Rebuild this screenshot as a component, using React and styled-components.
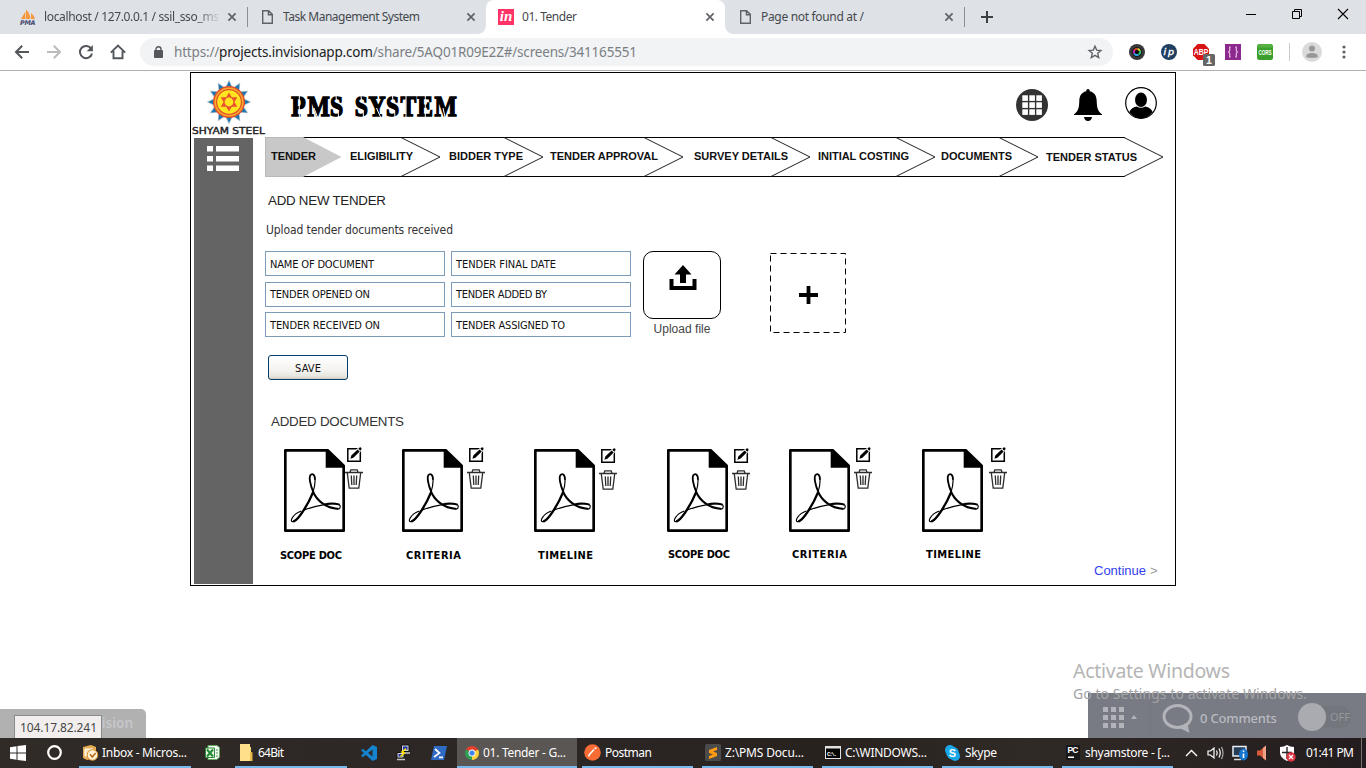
import React, { useLayoutEffect, useRef, useState } from "react";
import styled, { createGlobalStyle, css } from "styled-components";

const ui = `"Noto Sans", "Open Sans", sans-serif`;
const arial = `"Liberation Sans", Arial, sans-serif`;
const tahoma = `"DejaVu Sans Condensed", "DejaVu Sans", sans-serif`;

const Global = createGlobalStyle`
  * { box-sizing: border-box; }
  body { margin: 0; background: #fff; overflow: hidden; }
  svg { display: block; flex: none; overflow: visible; }
`;

/* ---------- text whose tracking is fitted to a given width ---------- */

const TextSpan = styled.span`
  display: inline-block;
  flex: none;
  white-space: pre;
  font-family: ${(p) => p.$font || ui};
  font-size: ${(p) => p.$size || 12}px;
  font-weight: ${(p) => p.$weight || 400};
  color: ${(p) => p.$color || "#000"};
  line-height: ${(p) => p.$lh || 16}px;
`;

function Text({ w, children, ...rest }) {
  const ref = useRef(null);
  const [spacing, setSpacing] = useState(0);
  useLayoutEffect(() => {
    if (!w) return;
    const natural = ref.current.getBoundingClientRect().width;
    setSpacing((w - natural) / (ref.current.textContent.length - 1));
  }, [w]);
  return (
    <TextSpan ref={ref} style={{ letterSpacing: spacing, marginRight: -spacing }} {...rest}>
      {children}
    </TextSpan>
  );
}

const Screen = styled.div`
  position: relative;
  width: 1366px;
  height: 768px;
  display: flex;
  flex-direction: column;
  overflow: hidden;
  background: #fff;
`;

/* ---------- browser tabs ---------- */

const TabStrip = styled.div`
  display: flex;
  height: 34px;
  padding-left: 8px;
  background: #dee1e6;
`;

const Tab = styled.div`
  position: relative;
  display: flex;
  align-items: center;
  width: 239px;
  height: 34px;
  padding: 0 11px 0 12px;
  ${(p) => p.$line && css`
    &::after { content: ""; position: absolute; right: -1px; top: 7px; width: 1px; height: 20px; background: #8b8e93; }
  `}
  ${(p) => p.$active && css`
    background: #fff;
    border-radius: 8px 8px 0 0;
    &::before, &::after {
      content: ""; position: absolute; bottom: 0; width: 8px; height: 8px;
    }
    &::before { left: -8px; background: radial-gradient(circle at 0 0, transparent 7.5px, #fff 8px); }
    &::after { right: -8px; background: radial-gradient(circle at 100% 0, transparent 7.5px, #fff 8px); }
  `}
`;

const TabIcon = styled.div`
  width: 24px;
  flex: none;
`;

const TabIconPad = styled.div`
  padding-left: 3px;
`;

const TabTitle = styled.div`
  flex: 1;
  overflow: hidden;
  height: 18px;
  display: flex;
  ${(p) => p.$fade && css`
    mask-image: linear-gradient(90deg, #000 152px, transparent 177px);
  `}
`;

const InvisionBadge = styled.div`
  width: 16px;
  height: 16px;
  background: #ff3366;
  color: #fff;
  font: italic 700 15px/14px "Liberation Serif", serif;
  text-align: center;
`;

const WindowButtons = styled.div`
  display: flex;
  margin-left: auto;
  height: 28px;
`;

const WindowButton = styled.div`
  width: 46px;
  display: flex;
  align-items: center;
  justify-content: center;
`;

const NewTab = styled.div`
  display: flex;
  align-items: center;
  padding-left: 17px;
`;

const CloseX = () => (
  <svg width="8" height="8" viewBox="0 0 8 8" stroke="#5f6368" strokeWidth="1.7">
    <path d="M.4 .4 7.6 7.6M7.6 .4 .4 7.6" />
  </svg>
);

const PageIcon = () => (
  <svg width="11" height="14" viewBox="0 0 11 14" fill="none" stroke="#5f6368" strokeWidth="1.4">
    <path d="M.7 .7H6.6L10.3 4.4V13.3H.7zM6.4 .9V4.7H10.1" />
  </svg>
);

const PmaIcon = () => (
  <svg width="16" height="16" viewBox="0 0 16 16">
    <path d="M1 10 5.4 2.5V10zM6 10V.5Q10.6 5 10.2 10zM11 10V4Q14.7 7 15 10z" fill="#f7983c" />
    <text x="0" y="15.6" fontSize="6.4" fontWeight="700" fontStyle="italic" fontFamily="DejaVu Sans" textLength="15.5" fill="#46496f">PMA</text>
  </svg>
);

/* ---------- address bar ---------- */

const Toolbar = styled.div`
  display: flex;
  align-items: center;
  height: 37px;
  padding: 0 14px 1px;
  background: #fff;
  border-bottom: 1px solid #b0b0b0;
`;

const NavIcons = styled.div`
  display: flex;
  width: 126px;
  gap: 16px;
`;

const Omnibox = styled.div`
  display: flex;
  align-items: center;
  width: 973px;
  height: 28px;
  padding: 0 11px 0 14px;
  border-radius: 14px;
  background: #f1f3f4;
`;

const Url = styled.div`
  flex: 1;
  padding-left: 11px;
  display: flex;
`;

const Muted = styled.span`
  color: #7b7f84;
`;

const Extensions = styled.div`
  display: flex;
  align-items: center;
  margin-left: 16px;
  gap: 16px;
`;

const ToolDivider = styled.div`
  width: 1px;
  height: 18px;
  margin: 0 12px 0 16px;
  background: #c9cbce;
`;

const MenuDots = styled.svg`
  margin-left: 20px;
  fill: #5f6368;
`;

function NavGlyphs() {
  return (
    <NavIcons>
      <svg width="16" height="16" viewBox="0 0 16 16" fill="none" stroke="#53575b" strokeWidth="2"><path d="M15 8H2.4M8.2 1.8 2 8l6.2 6.2" /></svg>
      <svg width="16" height="16" viewBox="0 0 16 16" fill="none" stroke="#b9bbbd" strokeWidth="2"><path d="M1 8H13.6M7.8 1.8 14 8l-6.2 6.2" /></svg>
      <svg width="16" height="16" viewBox="0 0 16 16"><path d="M13.3 4.9A6.1 6.1 0 1 0 14 9.4" fill="none" stroke="#53575b" strokeWidth="2" /><path d="M14.9 1V7.2H8.7z" fill="#53575b" /></svg>
      <svg width="16" height="16" viewBox="0 0 16 16" fill="none" stroke="#53575b" strokeWidth="1.9"><path d="M.8 8.6 8 1.6l7.2 7M3.5 7v7.3h9V7" /></svg>
    </NavIcons>
  );
}

function ExtensionIcons() {
  return (
    <Extensions>
      <svg width="16" height="16" viewBox="0 0 16 16">
        <circle cx="8" cy="8" r="8" fill="#39393b" />
        <circle cx="8" cy="8" r="4.8" fill="#0b0b0d" />
        <g fill="none" strokeWidth="1.9">
          <path d="M5.2 9.500A3.1 3.1 0 0 1 5.6 6" stroke="#d82ec0" />
          <path d="M5.6 6A3.1 3.1 0 0 1 8.6 5" stroke="#ed4a28" />
          <path d="M8.6 5A3.1 3.1 0 0 1 11 7" stroke="#cadb32" />
          <path d="M11 7A3.1 3.1 0 0 1 9.5 10.600" stroke="#28c36a" />
          <path d="M9.5 10.600A3.1 3.1 0 0 1 5.2 9.500" stroke="#2aa7e0" />
        </g>
      </svg>
      <svg width="16" height="16" viewBox="0 0 16 16">
        <circle cx="8" cy="8" r="8" fill="#213f61" />
        <text x="2.6" y="11" fontSize="9.5" fontStyle="italic" fontFamily="DejaVu Sans" stroke="#fff" strokeWidth=".4" textLength="10.5" fill="#fff">ip</text>
      </svg>
      <svg width="16" height="16" viewBox="0 0 16 16">
        <path d="M4.7 0h6.6L16 4.7v6.6L11.3 16H4.7L0 11.3V4.7z" fill="#d81313" />
        <text x="0.8" y="11" fontSize="8.5" fontWeight="700" fontFamily="Liberation Sans" textLength="14.6" lengthAdjust="spacingAndGlyphs" fill="#fff">ABP</text>
        <rect x="10" y="10" width="12" height="12" rx="1.5" fill="#666" />
        <text x="13" y="19.8" fontSize="10.5" fontWeight="700" fontFamily="Liberation Sans" fill="#fff">1</text>
      </svg>
      <svg width="16" height="16" viewBox="0 0 16 16">
        <rect width="16" height="16" fill="#8b2a8c" />
        <path d="M5.8 3H4.7V6.8L3.5 8l1.2 1.2V13h1.1M10.2 3h1.1V6.8L12.5 8l-1.2 1.2V13h-1.1" fill="none" stroke="#e9b8e6" strokeWidth="1.2" />
      </svg>
      <svg width="16" height="16" viewBox="0 0 16 16">
        <rect width="16" height="16" rx="2.5" fill="#3b9f2b" />
        <path d="M0 3.5Q0 0 3 0h10q3 0 3 3.500z" fill="#56b143" />
        <text x="1.4" y="10.8" fontSize="7.2" fontWeight="700" fontFamily="Liberation Sans" textLength="13.2" lengthAdjust="spacingAndGlyphs" fill="#fff">CORS</text>
      </svg>
    </Extensions>
  );
}

/* ---------- web page ---------- */

const Page = styled.main`
  flex: none;
  height: 638px;
  padding: 1px 0 0 190px;
`;

const Frame = styled.section`
  display: flex;
  flex-direction: column;
  width: 986px;
  height: 514px;
  border: 1px solid #000;
`;

const Header = styled.header`
  display: flex;
  height: 64px;
`;

const Brand = styled.div`
  display: flex;
  flex-direction: column;
  align-items: center;
  width: 75px;
  padding: 6px 0 0 1px;
`;

const Wordmark = styled.svg`
  margin: 1px 2px 0 0;
`;

const Title = styled.h1`
  margin: 15px 0 0 24px;
  width: 700px;
  height: 38px;
`;

const HeaderIcons = styled.div`
  display: flex;
  align-items: flex-start;
  margin-left: 26px;
  padding-top: 16px;
`;

const Body = styled.div`
  display: flex;
  flex: 1;
`;

const Sidebar = styled.aside`
  width: 59px;
  height: 446px;
  margin: 1px 0 0 3px;
  padding: 8px 0 0 13px;
  background: #646464;
`;

const Content = styled.div`
  width: 900px;
  margin-left: 12px;
`;

const Steps = styled.nav`
  display: flex;
  height: 40px;
`;

const Step = styled.div`
  position: relative;
  width: ${(p) => p.$width}px;
  padding: ${(p) => (p.$low ? 11 : 10)}px 0 0 ${(p) => p.$pad}px;
  border: solid #000;
  border-width: 1px 0;
  ${(p) => p.$current && css`
    background: #c8c8c8;
    border: solid #b9b9b9;
    border-width: 1px 0 1px 1px;
    z-index: 1;
  `}
`;

const StepTip = styled.svg`
  position: absolute;
  right: -39px;
  top: -1px;
`;

const StepLabel = styled.span`
  position: relative;
  display: flex;
  z-index: 2;
`;

const Heading = styled.div`
  display: flex;
  height: 16px;
  margin: ${(p) => p.$margin};
`;

const UploadArea = styled.div`
  display: flex;
  margin-top: 13px;
  height: 86px;
`;

const Fields = styled.div`
  display: grid;
  grid-template: 25px 25px 25px / 180px 180px;
  gap: 5.5px 6px;
  width: 366px;
`;

const Field = styled.div`
  display: flex;
  align-items: center;
  height: 25px;
  padding: 2px 0 0 4px;
  border: 1px solid #7c9bb8;
  background: #fff;
`;

const Upload = styled.div`
  display: flex;
  flex-direction: column;
  align-items: center;
  width: 78px;
  margin-left: 12px;
`;

const UploadBox = styled.div`
  display: flex;
  flex: none;
  justify-content: center;
  width: 78px;
  height: 68px;
  padding: 13px 0 0 1px;
  border: 1px solid #000;
  border-radius: 10px;
`;

const AddBox = styled.div`
  width: 76px;
  height: 80px;
  margin: 2px 0 0 49px;
`;

const SaveButton = styled.div`
  display: flex;
  align-items: center;
  justify-content: center;
  width: 80px;
  height: 25px;
  margin: 18px 0 0 3px;
  padding-top: 2px;
  border: 1px solid #003c6c;
  border-radius: 3px;
  background: linear-gradient(#fff, #f3f2ee 65%, #e8e6df 88%, #d2cdc2);
`;

const Documents = styled.div`
  display: flex;
  margin: 19px 0 0 19px;
  height: 116px;
`;

const DocCard = styled.div`
  width: ${(p) => p.$width}px;
`;

const DocTop = styled.div`
  display: flex;
  height: 83px;
`;

const DocActions = styled.div`
  display: flex;
  flex-direction: column;
  align-items: center;
  gap: 7px;
  width: 18px;
  margin: ${(p) => p.$drop - 2}px 0 0 ${(p) => p.$gap}px;
`;

const DocLabel = styled.div`
  display: flex;
  margin: ${(p) => p.$top}px 0 0 ${(p) => p.$shift}px;
`;

const Continue = styled.div`
  display: flex;
  gap: 4px;
  margin: -2px 0 0 829px;
`;

/* ---------- page drawings ---------- */

const ray = (n, r1, r2, half, offset = 0) =>
  Array.from({ length: n }, (_, i) => {
    const a = ((i + offset) * 2 * Math.PI) / n - Math.PI / 2;
    const p = (r, t) => `${(r * Math.cos(t)).toFixed(2)} ${(r * Math.sin(t)).toFixed(2)}`;
    return `M${p(r1, a - half)}L${p(r2, a)}L${p(r1, a + half)}z`;
  }).join("");

const SunLogo = () => (
  <svg width="46" height="46" viewBox="-23 -23 46 46">
    <path d={ray(12, 14.5, 22.4, 0.3)} fill="#b9c4ca" />
    <path d={ray(12, 14, 20.8, 0.24)} fill="#1878b5" />
    <circle r="16" fill="#e2512c" />
    <circle r="14.6" fill="#f9a92c" />
    <circle r="13" fill="#e2512c" />
    <circle r="11.800" fill="#ffe51f" />
    <path d="M0-9.500 8.200 4.750H-8.200zM0 9.500-8.200-4.750H8.200z" fill="#e9502c" />
    <circle r="4.400" fill="#ffe51f" />
  </svg>
);

const ListIcon = () => (
  <svg width="32" height="26" viewBox="0 0 32 26" fill="#fff">
    {[0, 10, 19.5].map((y) => (
      <g key={y}>
        <rect y={y} width="6" height="5.500" />
        <rect x="9" y={y} width="23" height="5.500" />
      </g>
    ))}
  </svg>
);

const StencilTitle = () => (
  <svg width="168" height="36" viewBox="0 0 168 36">
    <text
      transform="scale(.8 1)"
      x="1.500 22 50 66 81 98 120 138 159 180.500"
      y="28.300"
      fontFamily="Liberation Serif"
      fontWeight="700"
      fontSize="29.500"
      stroke="#000"
      strokeWidth="1.500"
    >PMS SYSTEM</text>
    <path d="M9.300 7v22M24 20l3.500 9M46 7l.5 7M48 22l.5 7M71 7l.5 7M73 22l.5 7M86.500 20l4 9M102.500 7l.5 7M104.500 22l.5 7M116 7v22M135.300 7v22M153 20l2 9" stroke="#fff" strokeWidth="1" fill="none" />
  </svg>
);

const GridBadge = () => (
  <svg width="32" height="32" viewBox="0 0 32 32">
    <circle cx="16" cy="16" r="16" fill="#333" />
    {[6.300, 13.300, 20.300].map((y) => [6.300, 13.300, 20.300].map((x) => <rect key={x + "-" + y} x={x} y={y} width="5.600" height="5.600" fill="#fff" />))}
  </svg>
);

const Bell = styled.svg`
  margin-left: 25px;
`;

const User = styled.svg`
  margin: -2px 0 0 22px;
`;

const HeaderGlyphs = () => (
  <HeaderIcons>
    <GridBadge />
    <Bell width="30" height="32" viewBox="0 0 30 32">
      <path d="M15 0q1.800 0 1.800 2.300C22 3.500 23.600 7.500 23.700 12c.2 7.500 1.300 10.300 5.300 13.300V26H1v-.7C5 22.300 6.100 19.500 6.300 12c.1-4.500 1.700-8.500 6.900-9.700Q13.200 0 15 0zM11 28h8q-.6 4-4 4t-4-4z" />
    </Bell>
    <User width="32" height="32" viewBox="0 0 32 32">
      <circle cx="16" cy="16" r="15.300" fill="#fff" stroke="#000" strokeWidth="1.200" />
      <ellipse cx="16" cy="12.800" rx="6" ry="7.200" />
      <path d="M4.400 25Q6 20.800 11.700 19.500q4.300 2.600 8.600 0 5.700 1.300 7.300 5.500-4.600 6.400-11.600 6.400T4.400 25z" />
    </User>
  </HeaderIcons>
);

const PdfIcon = () => (
  <svg width="61" height="83" viewBox="72 117 183 249" fill="none" stroke="#000">
    <path d="M76 121H203L251 167V362H76z" strokeWidth="8" strokeLinejoin="round" />
    <path d="M197 119H204L253 166V173H197z" fill="#000" stroke="none" />
    <path d="M160 246C150 224 147 202 151 196C156 189 165 192 165 209" strokeWidth="5.500" />
    <path d="M165 207C166 222 163 235 159 247C149 274 116 333 99 335C87 336 98 312 124 303" strokeWidth="3.500" />
    <path d="M159 247C147 277 118 328 100 335" strokeWidth="7" />
    <path d="M159 245C170 272 198 294 236 297" strokeWidth="6.500" />
    <path d="M236 297C242 296 241 286 239 285C225 275 166 287 135 299" strokeWidth="3.500" />
    <path d="M239 284C225 280 206 280 194 283" strokeWidth="5.500" />
  </svg>
);

const EditIcon = () => (
  <svg width="15" height="15" viewBox="0 0 15 15">
    <path d="M.8 1.700H13.300V14.200H.8z" fill="none" stroke="#000" strokeWidth="1.500" />
    <path d="M3.400 11.700 4.300 8.600 10.600 2.400 12.700 4.500 6.400 10.800zM11.300 1.700 12.600.5q.9-.4 1.600.3.700.8.100 1.700L13.300 3.700z" stroke="#fff" strokeWidth="1.500" />
    <path d="M3.400 11.700 4.300 8.600 10.600 2.400 12.700 4.500 6.400 10.800zM11.300 1.700 12.600.5q.9-.4 1.600.3.700.8.100 1.700L13.300 3.700z" />
  </svg>
);

const TrashIcon = () => (
  <svg width="18" height="20" viewBox="0 0 18 20" fill="none" stroke="#2d2d2d" strokeWidth="1.300">
    <path d="M0 3.500H18M5 3.300 5.800.8H12.200L13 3.300M2.300 3.800 4.200 19.200H13.800L15.700 3.800M6.300 6.500 6.800 16M9 6.500V16M11.700 6.500 11.200 16" />
  </svg>
);

const UploadIcon = () => (
  <svg width="28" height="25" viewBox="0 0 28 25">
    <path d="M14 0 22.500 9.500H17V18H11V9.500H5.500z" />
    <path d="M.5 14H4.500V21H23.500V14H27.500V25H.5z" />
  </svg>
);

/* ---------- page data ---------- */

const steps = [
  { label: "TENDER", width: 38, pad: 5, w: 45, current: true },
  { label: "ELIGIBILITY", width: 99, pad: 47, w: 63 },
  { label: "BIDDER TYPE", width: 103, pad: 47, w: 74 },
  { label: "TENDER APPROVAL", width: 140, pad: 45, w: 108 },
  { label: "SURVEY DETAILS", width: 127, pad: 49, w: 94 },
  { label: "INITIAL COSTING", width: 125, pad: 46, w: 91 },
  { label: "DOCUMENTS", width: 103, pad: 44, w: 71 },
  { label: "TENDER STATUS", width: 125, pad: 46, w: 91, low: true },
];

const fields = [
  ["NAME OF DOCUMENT", 104], ["TENDER FINAL DATE", 100],
  ["TENDER OPENED ON", 100], ["TENDER ADDED BY", 91],
  ["TENDER RECEIVED ON", 110], ["TENDER ASSIGNED TO", 109],
];

const docs = [
  { label: "SCOPE DOC", w: 62, width: 118, gap: 0, drop: 0, shift: -4, top: 16 },
  { label: "CRITERIA", w: 55, width: 132, gap: 4, drop: 0, shift: 4, top: 16 },
  { label: "TIMELINE", w: 55, width: 133, gap: 4, drop: 1, shift: 4, top: 16 },
  { label: "SCOPE DOC", w: 62, width: 122, gap: 4, drop: 1, shift: 1, top: 15 },
  { label: "CRITERIA", w: 55, width: 133, gap: 4, drop: 0, shift: 3, top: 15 },
  { label: "TIMELINE", w: 55, width: 90, gap: 6, drop: 0, shift: 4, top: 15 },
];

/* ---------- overlays above the taskbar ---------- */

const InvisionTab = styled.div`
  position: absolute;
  left: 0;
  top: 709px;
  width: 146px;
  height: 29px;
  padding: 5px 13px 0 0;
  text-align: right;
  border-radius: 0 5px 0 0;
  background: #b1b1b1;
`;

const AddressTip = styled.div`
  position: absolute;
  left: 14px;
  top: 715px;
  width: 88px;
  height: 23px;
  padding: 2px 0 0 5px;
  border: 1px solid #8a8a8a;
  border-bottom: 0;
  background: #f2eeee;
`;

const CommentBar = styled.div`
  position: absolute;
  left: 1088px;
  top: 693px;
  width: 278px;
  height: 45px;
  display: flex;
  align-items: center;
  padding: 3px 15px 0 15px;
  background: #787b83;
`;

const BarDivider = styled.div`
  width: 1px;
  height: 45px;
  margin: -3px 11px 0 13px;
  background: #74777e;
`;

const Caret = styled.svg`
  margin-left: 7px;
`;

const CommentCount = styled.div`
  display: flex;
  margin: 1px 0 0 7px;
`;

const Toggle = styled.div`
  display: flex;
  align-items: center;
  gap: 4px;
  width: 57px;
  height: 22px;
  margin-left: 21px;
  border-radius: 11px;
  background: #73767c;
`;

const Knob = styled.div`
  width: 28px;
  height: 28px;
  border-radius: 50%;
  background: #a9abb0;
`;

const Watermark = styled.div`
  position: absolute;
  left: 1073px;
  top: 657px;
  display: flex;
  flex-direction: column;
  align-items: flex-start;
`;

/* ---------- taskbar ---------- */

const Taskbar = styled.footer`
  position: absolute;
  left: 0;
  top: 738px;
  display: flex;
  align-items: center;
  width: 1366px;
  height: 30px;
  background: linear-gradient(90deg, #302b27, #2b2624 45%, #28221f 60%, #302a26 75%, #241d1f);
`;

const TaskItem = styled.div`
  display: flex;
  align-items: center;
  width: ${(p) => p.$width}px;
  height: 30px;
  margin-left: ${(p) => p.$ml || 0}px;
  padding: 1px 0 0 ${(p) => p.$pad || 0}px;
  background: ${(p) => (p.$active ? "#5a5653" : "transparent")};
  border-bottom: 2px solid ${(p) => (p.$open ? "#76b9ed" : "transparent")};
`;

const TaskIcon = styled.div`
  display: flex;
  align-items: center;
  width: ${(p) => p.$width}px;
  flex: none;
`;

const icons = {
  windows: <svg width="16" height="16" viewBox="0 0 16 16" fill="#fff"><path d="M0 2.300 6.500 1.300V7.500H0zM7.500 1.100 16 0V7.500H7.500zM0 8.500H6.500V14.700L0 13.700zM7.500 8.500H16V16L7.500 14.900z" /></svg>,
  cortana: <svg width="15" height="15" viewBox="0 0 15 15"><circle cx="7.500" cy="7.500" r="6.300" fill="none" stroke="#fff" strokeWidth="2.200" /></svg>,
  outlook: <svg width="16" height="16" viewBox="0 0 16 16"><path d="M1 2 9 0l5 2V13L5 15 1 13z" fill="#e8ad52" /><path d="M3 4H11V11H3z" fill="#f8e2b3" stroke="#fff" /><circle cx="10.500" cy="10" r="5.300" fill="#fff3d4" stroke="#d88a2b" /><path d="M8 9.200 10.300 12 13.600 8" fill="none" stroke="#b96c1d" strokeWidth="1.600" /></svg>,
  excel: <svg width="15" height="15" viewBox="0 0 15 15"><path d="M3 .5H12L14.500 2.500V12L12 14.500H3z" fill="#f3faf1" stroke="#64a761" /><path d="M.5 3H9.500V12.500H.5z" fill="#e9f5e6" stroke="#2f8a3a" /><path d="M2 4.500 8 11.500M8 4.500 2 11.500" stroke="#1f8a33" strokeWidth="2" /><path d="M11 5H13M11 8H13M11 11H13" stroke="#47934d" /></svg>,
  folder: <svg width="14" height="17" viewBox="0 0 14 17"><path d="M0 0H8V3H11V17H0z" fill="#f9d978" /><path d="M8 9 12.500 8V17H8z" fill="#e6b94d" /><path d="M0 0H10V17H0z" fill="#ffe08a" /></svg>,
  vscode: <svg width="16" height="16" viewBox="0 0 16 16"><path d="M11.500 0 16 2V14L11.500 16 0 5.200 1.800 3.800 11.500 11.500V4.500L1.800 12.200 0 10.800z" fill="#1584cf" /></svg>,
  putty: <svg width="15" height="17" viewBox="0 0 15 17"><path d="M5.500 1H13V7.500H5.500zM1 8.500H8V14H1z" fill="#d4d4d4" stroke="#111" /><path d="M7 2.500H11.500V5.800H7zM2.500 10H6.500V12.500H2.500z" fill="#1c31a8" /><path d="M10 4.500 6 8 8.500 9 4.500 12.500" fill="none" stroke="#ffe800" strokeWidth="1.600" /><path d="M1 15.500H9M9 9H14" stroke="#c4c4c4" strokeWidth="1.500" /></svg>,
  shell: <svg width="16" height="14" viewBox="0 0 16 14"><path d="M3 0H16L13 14H0z" fill="#2f6bc4" /><path d="M4 3 8.500 7 3 11M8 11.300H12" fill="none" stroke="#fff" strokeWidth="1.700" /></svg>,
  chrome: <svg width="14" height="14" viewBox="-7 -7 14 14"><path d="M0 0-6.060-3.500A7 7 0 0 1 6.060-3.500z" fill="#e3402f" /><path d="M0 0 6.060-3.500A7 7 0 0 1 0 7z" fill="#fdd23a" /><path d="M0 0 0 7A7 7 0 0 1-6.060-3.500z" fill="#2f9f50" /><circle r="3.500" fill="#fff" /><circle r="2.600" fill="#3f83ec" /></svg>,
  postman: <svg width="17" height="17" viewBox="0 0 17 17"><circle cx="8.500" cy="8.500" r="8.300" fill="#f76b35" /><path d="M4.500 12.500 5.500 10.500 10 5.500M10.500 4.500 12.500 4" stroke="#fff" strokeWidth="1.500" /></svg>,
  sublime: <svg width="16" height="17" viewBox="0 0 16 17"><rect width="16" height="17" rx="1.500" fill="#4b4b4b" /><path d="M12 3V6L8 7.500 12 9V12L4 15V12L8 10.500 4 9V6z" fill="#ff9c12" /></svg>,
  cmd: <svg width="16" height="13" viewBox="0 0 16 13"><rect width="16" height="13" fill="#e2e2e2" /><rect x="1" y="2.500" width="14" height="9.500" fill="#050505" /><text x="2" y="9.500" fontSize="6" fontWeight="700" fontFamily="Liberation Mono" textLength="10" fill="#fff">C:\.</text></svg>,
  skype: <svg width="15" height="16" viewBox="0 0 15 16"><circle cx="5" cy="5" r="5" fill="#19a7e8" /><circle cx="10" cy="11" r="5" fill="#19a7e8" /><circle cx="7.500" cy="8" r="6.300" fill="#19a7e8" /><text x="3.800" y="12" fontSize="11" fontWeight="700" fontFamily="Liberation Sans" fill="#fff">S</text></svg>,
  pycharm: <svg width="14" height="15" viewBox="0 0 14 15"><rect width="14" height="15" fill="#181818" /><text x="1.500" y="8" fontSize="8.500" fontWeight="700" fontFamily="Liberation Sans" textLength="11" fill="#fff">PC</text><rect x="2" y="11.500" width="6" height="1.500" fill="#fff" /></svg>,
};

const tasks = [
  { icon: "windows", ml: 10, width: 16 },
  { icon: "cortana", ml: 20.5, width: 15 },
  { icon: "outlook", ml: 17.5, width: 112, pad: 3, iw: 20, text: "Inbox - Micros...", w: 85, open: true },
  { icon: "excel", ml: 14, width: 15 },
  { icon: "folder", ml: 15, width: 112, pad: 5, iw: 18, text: "64Bit", w: 26, open: true },
  { icon: "vscode", ml: 14, width: 16 },
  { icon: "putty", ml: 19, width: 15 },
  { icon: "shell", ml: 20, width: 16 },
  { icon: "chrome", ml: 10, width: 120, pad: 8, iw: 18, text: "01. Tender - G...", w: 83, open: true, active: true },
  { icon: "postman", ml: 5, width: 111, pad: 2, iw: 21, text: "Postman", w: 47, open: true },
  { icon: "sublime", ml: 9, width: 111, pad: 3, iw: 20, text: "Z:\\PMS Docu...", w: 79, open: true },
  { icon: "cmd", ml: 9, width: 111, pad: 3, iw: 20, text: "C:\\WINDOWS...", w: 82, open: true },
  { icon: "skype", ml: 9, width: 111, pad: 3, iw: 20, text: "Skype", w: 32, open: true },
  { icon: "pycharm", ml: 9, width: 111, pad: 4, iw: 19, text: "shyamstore - [...", w: 85, open: true },
];

const Tray = styled.div`
  display: flex;
  align-items: center;
  margin-left: 12px;
`;

const ClockBox = styled.div`
  display: flex;
  align-items: center;
  height: 30px;
  margin-left: 11px;
  padding-right: 7px;
  border-right: 1px solid #77716e;
`;

const TrayGlyphs = () => (
  <svg width="110" height="18" viewBox="0 0 110 18">
    <path d="M1 12 6.500 6.500 12 12" fill="none" stroke="#fff" strokeWidth="1.400" />
    <g fill="none" stroke="#fff" strokeWidth="1.200">
      <path d="M23 7H25.500L29 4V14L25.500 11H23z" />
      <path d="M31.500 6.500Q33 9 31.500 11.500M34 4.500Q36.500 9 34 13.500" />
      <path d="M36.500 3Q39.500 9 36.500 15" stroke="#aaa" />
    </g>
    <path d="M48 2.500H61V12H48z" fill="#263b55" stroke="#e7eef7" strokeWidth="1.500" />
    <path d="M49 15.500H56" stroke="#ddd" strokeWidth="1.500" />
    <ellipse cx="58.500" cy="10.500" rx="4.500" ry="6" fill="#1475cf" />
    <path d="M58.500 6.500V8M58.500 9.500V14" stroke="#fff" strokeWidth="1.600" />
    <path d="M72 6.500H75L81 1.500V16.500L75 11.500H72z" fill="#d75b3b" />
    <path d="M78 4 81 1.500V16.500L78 14z" fill="#f0a287" />
    <path d="M95 3Q99 3 102 1 105 3 109 3V8.500Q109 14 102 17 95 14 95 8.500z" fill="#fff" />
    <path d="M102 3V15M97 8.500H107" stroke="#2a2624" strokeWidth="1.400" />
    <circle cx="106" cy="13" r="4.700" fill="#de3340" />
    <path d="M104 11 108 15M108 11 104 15" stroke="#fff" strokeWidth="1.300" />
  </svg>
);

/* ---------- app ---------- */

export default function App() {
  const tabText = { $size: 12, $lh: 18, $color: "#45494d" };
  return (
    <Screen>
      <Global />
      <TabStrip>
        <Tab $line>
          <TabIcon><PmaIcon /></TabIcon>
          <TabTitle $fade><Text {...tabText} w={175}>localhost / 127.0.0.1 / ssil_sso_ms</Text></TabTitle>
          <CloseX />
        </Tab>
        <Tab>
          <TabIcon><TabIconPad><PageIcon /></TabIconPad></TabIcon>
          <TabTitle><Text {...tabText} w={137}>Task Management System</Text></TabTitle>
          <CloseX />
        </Tab>
        <Tab $active>
          <TabIcon><InvisionBadge>in</InvisionBadge></TabIcon>
          <TabTitle><Text {...tabText} w={55}>01. Tender</Text></TabTitle>
          <CloseX />
        </Tab>
        <Tab $line>
          <TabIcon><TabIconPad><PageIcon /></TabIconPad></TabIcon>
          <TabTitle><Text {...tabText} w={103}>Page not found at /</Text></TabTitle>
          <CloseX />
        </Tab>
        <NewTab>
          <svg width="12" height="12" viewBox="0 0 12 12" stroke="#3c4043" strokeWidth="2"><path d="M6 0V12M0 6H12" /></svg>
        </NewTab>
        <WindowButtons>
          <WindowButton><svg width="10" height="10" viewBox="0 0 10 10"><rect y="5" width="10" height="1" /></svg></WindowButton>
          <WindowButton>
            <svg width="10" height="10" viewBox="0 0 10 10" fill="none" stroke="#000"><path d="M.5 2.500H7.500V9.500H.5zM2.500 2.500V.5H9.500V7.500H7.500" /></svg>
          </WindowButton>
          <WindowButton><svg width="10" height="10" viewBox="0 0 10 10" stroke="#000" strokeWidth="1.100"><path d="M0 0 10 10M10 0 0 10" /></svg></WindowButton>
        </WindowButtons>
      </TabStrip>

      <Toolbar>
        <NavGlyphs />
        <Omnibox>
          <svg width="9" height="12" viewBox="0 0 9 12"><rect y="4" width="9" height="8" rx="1" fill="#54585c" /><path d="M2 5V3.200Q2 .8 4.500.8T7 3.200V5" fill="none" stroke="#54585c" strokeWidth="1.400" /></svg>
          <Url>
            <Text $size={13.5} $lh={18} $color="#202124" w={463}>
              <Muted>https://</Muted>projects.invisionapp.com<Muted>/share/5AQ01R09E2Z#/screens/341165551</Muted>
            </Text>
          </Url>
          <svg width="14" height="14" viewBox="0 0 14 14" fill="none" stroke="#5f6368" strokeWidth="1.400"><path d="M7 1.200 8.700 5.100 12.900 5.500 9.700 8.300 10.700 12.500 7 10.300 3.300 12.500 4.300 8.300 1.100 5.500 5.300 5.100z" /></svg>
        </Omnibox>
        <ExtensionIcons />
        <ToolDivider />
        <svg width="20" height="20" viewBox="0 0 20 20"><circle cx="10" cy="10" r="10" fill="#dadada" /><circle cx="10" cy="6.500" r="3" fill="#989898" /><path d="M4 15Q4 11 10 11T16 15Q14 16 10 16T4 15z" fill="#989898" /></svg>
        <MenuDots width="4" height="14" viewBox="0 0 4 14"><circle cx="2" cy="2" r="1.600" /><circle cx="2" cy="7" r="1.600" /><circle cx="2" cy="12" r="1.600" /></MenuDots>
      </Toolbar>

      <Page>
        <Frame>
          <Header>
            <Brand>
              <SunLogo />
              <Wordmark width="73" height="8" viewBox="0 0 73 8">
                <text x="0" y="8" fontFamily="DejaVu Sans" fontSize="8" textLength="73" lengthAdjust="spacingAndGlyphs" fill="#222" stroke="#222" strokeWidth=".35">SHYAM STEEL</text>
              </Wordmark>
            </Brand>
            <Title><StencilTitle /></Title>
            <HeaderGlyphs />
          </Header>
          <Body>
            <Sidebar><ListIcon /></Sidebar>
            <Content>
              <Steps>
                {steps.map((s) => (
                  <Step key={s.label} $width={s.width} $pad={s.pad} $current={s.current} $low={s.low}>
                    <StepTip width="39" height="40" viewBox="0 0 39 40">
                      {s.current
                        ? <path d="M0 0 38.500 20 0 40z" fill="#c8c8c8" />
                        : <path d="M-1 .5 38 20-1 39.500" fill="none" stroke="#222" strokeWidth="1" />}
                    </StepTip>
                    <StepLabel><Text $font={arial} $size={11} $weight={700} $color="#111" w={s.w}>{s.label}</Text></StepLabel>
                  </Step>
                ))}
              </Steps>
              <Heading $margin="16px 0 0 3px"><Text $font={arial} $size={13.33} $color="#222" w={118}>ADD NEW TENDER</Text></Heading>
              <Heading $margin="13px 0 0 1px"><Text $font={tahoma} $size={12} $color="#333" w={187}>Upload tender documents received</Text></Heading>
              <UploadArea>
                <Fields>
                  {fields.map(([label, w]) => (
                    <Field key={label}><Text $font={tahoma} $size={11} $color="#111" w={w}>{label}</Text></Field>
                  ))}
                </Fields>
                <Upload>
                  <UploadBox><UploadIcon /></UploadBox>
                  <Text $font={arial} $size={12} $lh={20} $color="#444" w={57}>Upload file</Text>
                </Upload>
                <AddBox>
                  <svg width="76" height="80" viewBox="0 0 76 80">
                    <rect x=".5" y=".5" width="75" height="79" fill="none" stroke="#000" strokeDasharray="6 4" />
                    <path d="M29 42H48M38.500 33V51" stroke="#000" strokeWidth="3.800" />
                  </svg>
                </AddBox>
              </UploadArea>
              <SaveButton><Text $font={tahoma} $size={11} $color="#111" w={26}>SAVE</Text></SaveButton>
              <Heading $margin="34px 0 0 6px"><Text $font={arial} $size={13.33} $color="#333" w={133}>ADDED DOCUMENTS</Text></Heading>
              <Documents>
                {docs.map((d, i) => (
                  <DocCard key={i} $width={d.width}>
                    <DocTop>
                      <PdfIcon />
                      <DocActions $drop={d.drop} $gap={d.gap}><EditIcon /><TrashIcon /></DocActions>
                    </DocTop>
                    <DocLabel $top={d.top} $shift={d.shift}>
                      <Text $font={tahoma} $size={11} $weight={700} w={d.w}>{d.label}</Text>
                    </DocLabel>
                  </DocCard>
                ))}
              </Documents>
              <Continue>
                <Text $font={arial} $size={13} $color="#3340ee" w={52}>Continue</Text>
                <Text $font={arial} $size={13} $color="#999">&gt;</Text>
              </Continue>
            </Content>
          </Body>
        </Frame>
      </Page>

      <InvisionTab><Text $size={13.5} $weight={600} $lh={18} $color="#c6c6ca">vision</Text></InvisionTab>
      <AddressTip><Text $size={12} $lh={17} $color="#474747" w={77}>104.17.82.241</Text></AddressTip>

      <CommentBar>
        <svg width="21" height="21" viewBox="0 0 21 21" fill="#b2b4b9">
          {[0, 8, 16].map((y) => [0, 8, 16].map((x) => <rect key={x + "-" + y} x={x} y={y} width="5" height="5" />))}
        </svg>
        <Caret width="6" height="4" viewBox="0 0 6 4"><path d="M0 4 3 0 6 4z" fill="#b2b4b9" /></Caret>
        <BarDivider />
        <svg width="31" height="27" viewBox="0 0 31 27" fill="none" stroke="#b2b4b9" strokeWidth="3">
          <ellipse cx="15.500" cy="12.500" rx="13.500" ry="11" />
          <path d="M19 23.500 26 27 24.500 20" strokeWidth="2" fill="#b2b4b9" />
        </svg>
        <CommentCount><Text $size={13} $weight={500} $color="#b8bac0" w={77}>0 Comments</Text></CommentCount>
        <Toggle>
          <Knob />
          <Text $size={11} $color="#94969c" w={20}>OFF</Text>
        </Toggle>
      </CommentBar>

      <Watermark>
        <Text $size={19.5} $lh={28} $color="#b5b5b5" w={157}>Activate Windows</Text>
        <Text $size={14} $lh={18} $color="#a3a3a5" w={234}>Go to Settings to activate Windows.</Text>
      </Watermark>

      <Taskbar>
        {tasks.map((t) => (
          <TaskItem key={t.icon} $width={t.width} $ml={t.ml} $pad={t.pad} $open={t.open} $active={t.active}>
            <TaskIcon $width={t.iw || t.width}>{icons[t.icon]}</TaskIcon>
            {t.text && <Text $size={12} $color="#fff" w={t.w}>{t.text}</Text>}
          </TaskItem>
        ))}
        <Tray>
          <TrayGlyphs />
          <ClockBox><Text $size={12} $color="#fff" w={48}>01:41 PM</Text></ClockBox>
        </Tray>
      </Taskbar>
    </Screen>
  );
}
